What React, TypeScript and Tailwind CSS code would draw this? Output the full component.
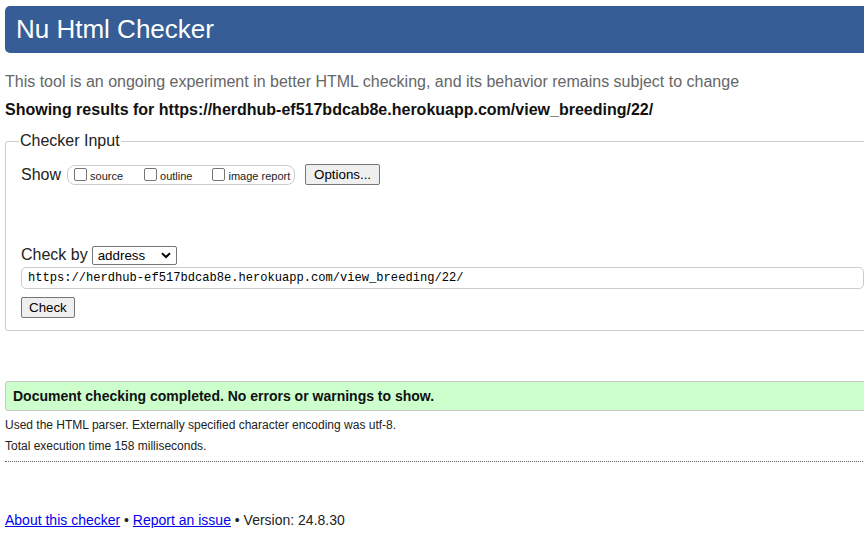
import React from "react";

const sans = { fontFamily: '"Liberation Sans", Arial, sans-serif' };

function Box({ label }: { label: string }) {
  return (
    <label className="flex items-center">
      <span className="block w-[13px] h-[13px] border border-[#767676] rounded-[2px] bg-white" />
      <span className="ml-[3px] text-[11px] leading-[13px] text-[#222] translate-y-[2px]">{label}</span>
    </label>
  );
}

export default function App() {
  return (
    <div
      className="w-full h-screen overflow-hidden bg-white text-[#222]"
      style={{ fontFamily: '"Liberation Sans", Arial, sans-serif' }}
    >
      <div className="ml-[5px] w-[880px]">
        <header className="mt-[6px] h-[47px] bg-[#365d95] rounded-l-[5px] flex items-center pl-[11px] pb-[2px]">
          <h1 className="text-[26px] leading-[30px] text-white font-normal">Nu Html Checker</h1>
        </header>

        <p className="mt-[19px] text-[16px] leading-[20px] text-[#666]">
          This tool is an ongoing experiment in better HTML checking, and its behavior remains subject to change
        </p>
        <p className="mt-[8px] text-[16px] leading-[20px] font-bold text-[#111]">
          Showing results for https://herdhub-ef517bdcab8e.herokuapp.com/view_breeding/22/
        </p>

        <fieldset className="mt-[11px] border border-[#cccccc] rounded-[3px] pl-[15px] pt-[13px] pb-[12px]">
          <legend className="-ml-[2px] px-[1px] text-[16px] leading-[20px] text-[#222]">Checker Input</legend>

          <div className="flex items-center h-[21px]">
            <span className="text-[16px] leading-[20px]">Show</span>
            <div className="ml-[6px] h-[20px] w-[228px] border border-[#cccccc] rounded-[8px] flex items-center pl-[6px]">
              <Box label="source" />
              <div className="w-[21px]" />
              <Box label="outline" />
              <div className="w-[20px]" />
              <Box label="image report" />
            </div>
            <button className="ml-[10px] h-[21px] px-[8px] text-[13.33px] leading-[15px] bg-[#efefef] border border-[#767676] rounded-[2px] text-black">
              Options...
            </button>
          </div>

          <div className="mt-[60px] flex items-center h-[20px]">
            <span className="text-[16px] leading-[20px]">Check by</span>
            <div className="ml-[4px] h-[19px] w-[85px] border border-[#767676] rounded-[2px] bg-white flex items-center justify-between pl-[5px] pr-[4px]">
              <span className="text-[13.33px] leading-[15px] text-black">address</span>
              <svg width="10" height="7" viewBox="0 0 10 7" className="mr-[1px]">
                <polyline points="1,1.2 5,5 9,1.2" fill="none" stroke="#000" strokeWidth="2" />
              </svg>
            </div>
          </div>

          <div className="mt-[2px] h-[22px] w-[843px] border border-[#cccccc] rounded-[5px] flex items-center pl-[6px]">
            <span
              className="text-[12.1px] leading-[14px] text-black"
              style={{ fontFamily: '"Liberation Mono", "Courier New", monospace' }}
            >
              https://herdhub-ef517bdcab8e.herokuapp.com/view_breeding/22/
            </span>
          </div>

          <button className="mt-[8px] h-[21px] px-[7px] text-[13.33px] leading-[15px] bg-[#efefef] border border-[#767676] rounded-[2px] text-black block">
            Check
          </button>
        </fieldset>

        <div className="mt-[50px] h-[30px] bg-[#ccffcc] border border-[#c8c8c8] rounded-[3px] flex items-center px-[7px]">
          <span className="text-[14px] leading-[16px] font-bold text-[#111]">
            Document checking completed. No errors or warnings to show.
          </span>
        </div>

        <p className="mt-[4px] text-[12px] leading-[21px] text-[#222]">
          Used the HTML parser. Externally specified character encoding was utf-8.
        </p>
        <p className="text-[12px] leading-[21px] text-[#222]">Total execution time 158 milliseconds.</p>
        <div className="mt-[4px] border-t border-dotted border-[#666]" />

        <p className="mt-[48px] text-[14px] leading-[20px] text-[#222]" style={sans}>
          <a href="#" className="text-[#0000ee] underline">About this checker</a>
          {" • "}
          <a href="#" className="text-[#0000ee] underline">Report an issue</a>
          {" • Version: 24.8.30"}
        </p>
      </div>
    </div>
  );
}
